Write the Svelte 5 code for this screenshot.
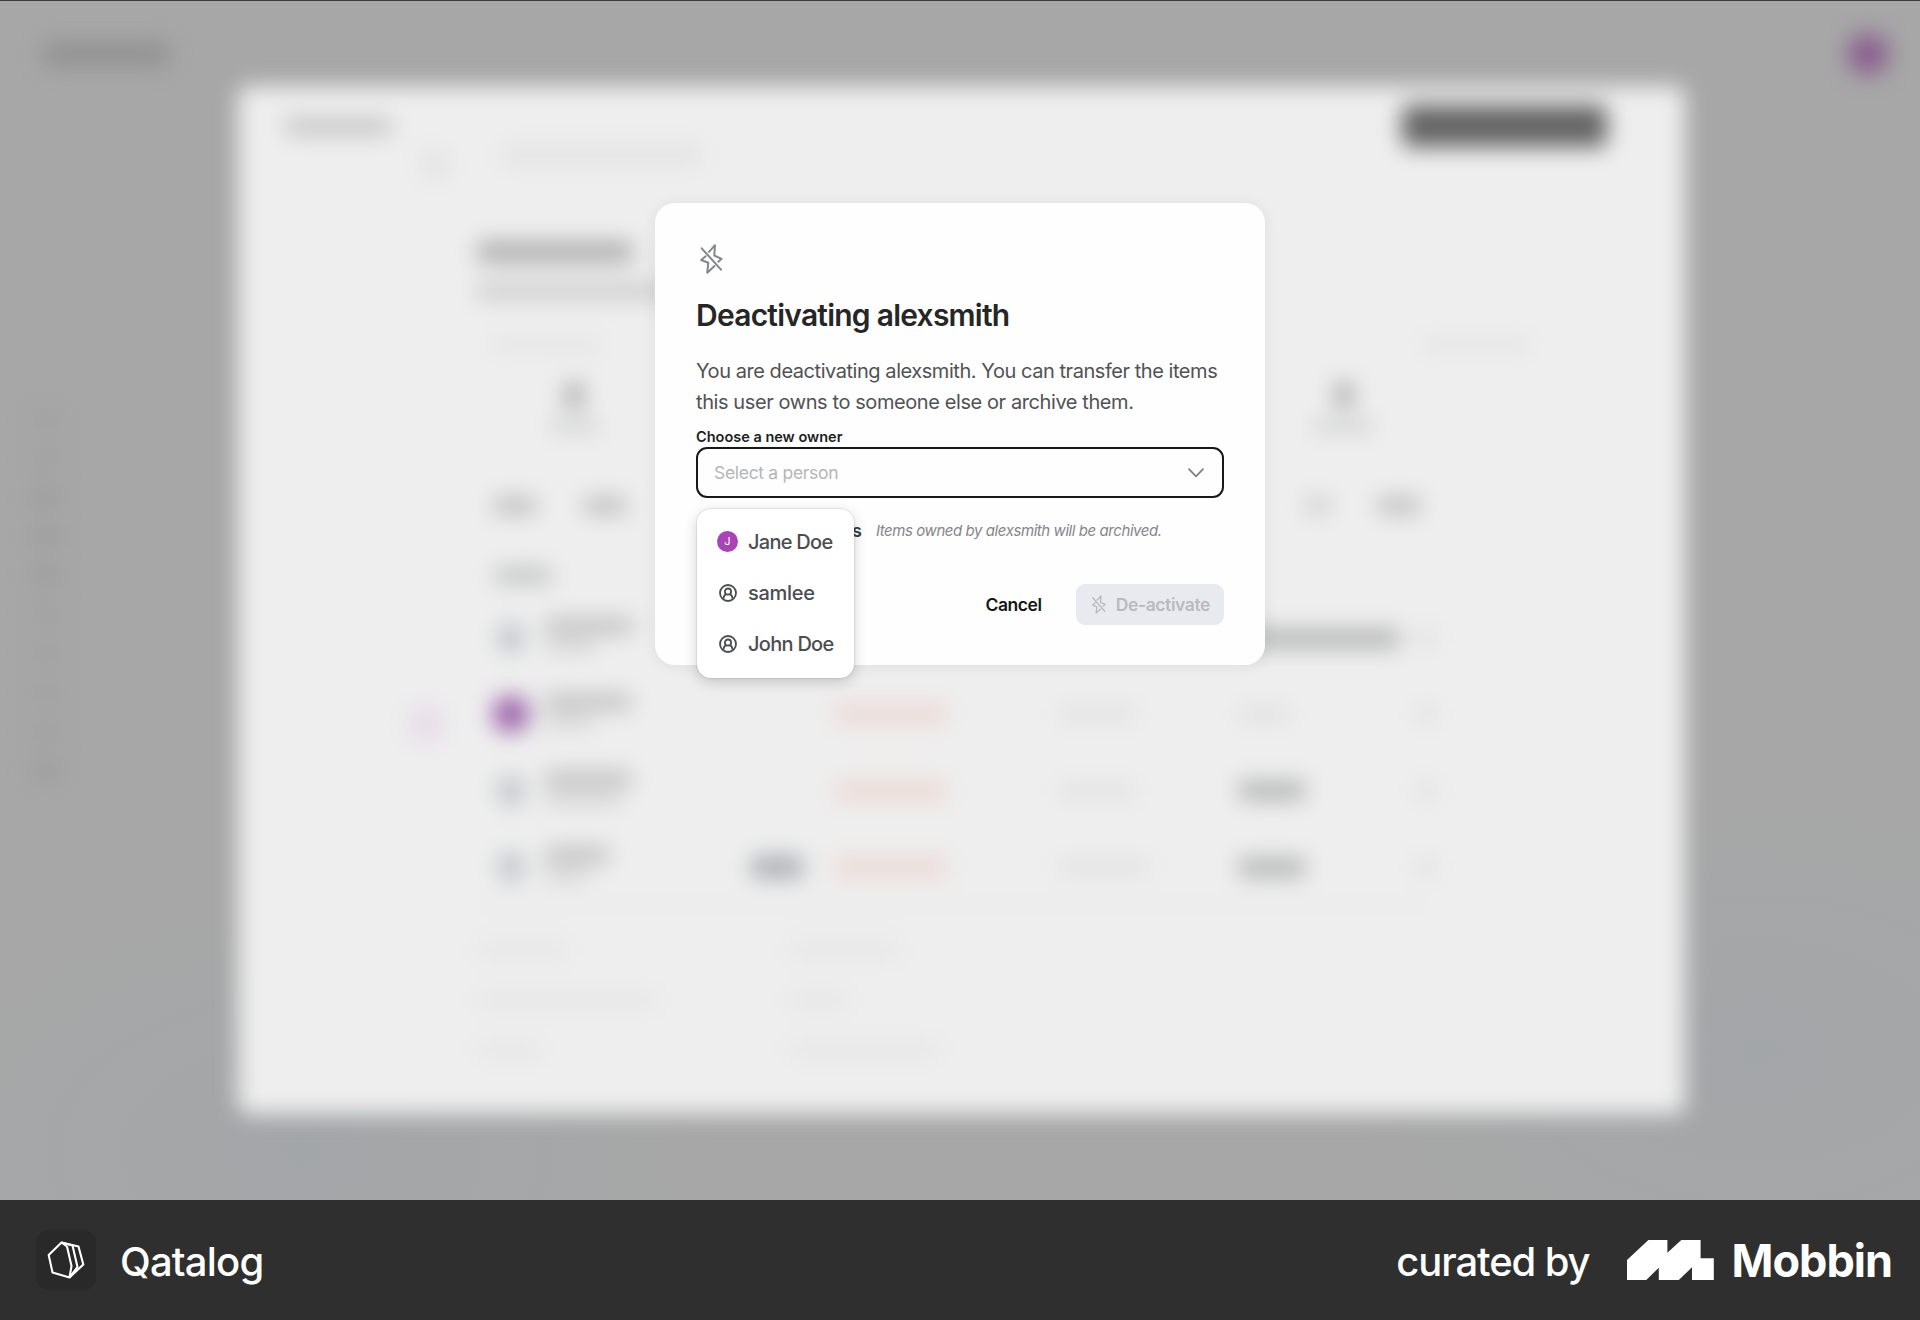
<script>
  const people = [
    { name: 'Jane Doe', initial: 'J', cls: 'jane' },
    { name: 'samlee', cls: 'sam' },
    { name: 'John Doe', cls: 'john' }
  ];

  // Widths of the out-of-focus table cells behind the dialog.
  const rows = [
    { avatar: 'muted', name: 88, sub: 50, tag: 0, alert: 0, note: 0, role: 160, dark: true },
    { avatar: 'purple', name: 86, sub: 46, tag: 0, alert: 112, note: 76, role: 50, dark: false },
    { avatar: 'muted', name: 86, sub: 76, tag: 0, alert: 112, note: 76, role: 66, dark: true },
    { avatar: 'muted', name: 64, sub: 42, tag: 52, alert: 112, note: 90, role: 66, dark: true }
  ];

  const ghosts = [
    [90, 110],
    [180, 60],
    [64, 150]
  ];

  const nav = [1, 1, 3, 3, 3, 1, 1, 1, 1, 3];
</script>

{#snippet boltOff()}
  <svg class="bolt" viewBox="0 0 24 30" fill="none" stroke="currentColor" stroke-linejoin="round" stroke-linecap="round">
    <path d="M2.700 4.300 22 25.700" />
    <path d="M10 7.900 16 1.200 15.300 11.500 22.600 14.800 19.300 17.700" />
    <path d="M6.600 12.200 2.200 16 9.300 18.700 8.300 28.700 15.500 22" />
  </svg>
{/snippet}

{#snippet person()}
  <svg class="person" viewBox="0 0 18 18" fill="none" stroke="currentColor" stroke-width="1.8">
    <circle cx="9" cy="9" r="8" />
    <circle cx="9" cy="7.600" r="3.100" />
    <path d="M4.400 14.600c.3-2.400 1.300-3.900 2.900-4.500M13.600 14.600c-.3-2.400-1.300-3.900-2.900-4.500" />
  </svg>
{/snippet}

<main>
  <section class="stage">
    <div class="page" aria-hidden="true">
      <div class="topbar">
        <i class="brand"></i>
        <i class="me"></i>
      </div>
      <div class="columns">
        <nav>
          {#each nav as strength}
            <i class:strong={strength === 3}></i>
          {/each}
        </nav>
        <div class="panel">
          <div class="head"><i class="crumb"></i><i class="action"></i></div>
          <div class="faint-head"><i class="dot"></i><i class="line"></i></div>
          <div class="body">
            <i class="title"></i>
            <i class="subtitle"></i>
            <div class="split caption"><i></i><i></i></div>
            <div class="split numbers"><i></i><i></i></div>
            <div class="split labels"><i></i><i></i></div>
            <div class="tabs"><i></i><i></i><i class="far"></i><i></i></div>
            <i class="section"></i>
            <div class="table">
              {#each rows as row}
                <div class="row">
                  <i class="avatar {row.avatar}"></i>
                  <div class="who">
                    <i style:width="{row.name}px"></i>
                    <i class="sub" style:width="{row.sub}px"></i>
                  </div>
                  <i class="tag" style:width="{row.tag}px"></i>
                  <i class="alert" style:width="{row.alert}px"></i>
                  <i class="note" style:width="{row.note}px"></i>
                  <i class="role" class:dark={row.dark} style:width="{row.role}px"></i>
                  <i class="more"></i>
                </div>
              {/each}
            </div>
            <div class="ghosts">
              {#each ghosts as [a, b]}
                <div><i style:width="{a}px"></i><i style:width="{b}px"></i></div>
              {/each}
            </div>
          </div>
        </div>
      </div>
    </div>

    <div class="overlay">
      <div class="modal" role="dialog" aria-labelledby="dialog-title">
        <div class="symbol">{@render boltOff()}</div>
        <h1 id="dialog-title">Deactivating alexsmith</h1>
        <p class="copy">
          <span class="l1">You are deactivating alexsmith. You can transfer the items</span>
          <span class="l2">this user owns to someone else or archive them.</span>
        </p>
        <div class="label"><span>Choose a new owner</span></div>
        <div class="select">
          <span>Select a person</span>
          <svg viewBox="0 0 16 10" fill="none" stroke="currentColor" stroke-width="1.7" stroke-linecap="round" stroke-linejoin="round">
            <path d="M1 1.200 8 8.400 15 1.200" />
          </svg>
          <ul class="menu">
            {#each people as p}
              <li>
                <span class="pic">
                  {#if p.initial}<b>{p.initial}</b>{:else}{@render person()}{/if}
                </span>
                <span class={p.cls}>{p.name}</span>
              </li>
            {/each}
          </ul>
        </div>
        <div class="archive">
          <strong>s</strong>
          <em>Items owned by alexsmith will be archived.</em>
        </div>
        <div class="actions">
          <button class="cancel">Cancel</button>
          <button class="deactivate" disabled>{@render boltOff()}<span>De-activate</span></button>
        </div>
      </div>
    </div>
  </section>

  <footer>
    <div class="tile">
      <svg viewBox="0 0 38 38" fill="none" stroke="#fff" stroke-width="2.1" stroke-linejoin="round">
        <path d="M14.500 1.500 1.700 14 5.500 31.500 22.500 36.500 24.500 25 20 5.500Z" />
        <path d="M14.500 1.500 25.500 4.500 30.500 26 22.500 36.500" />
        <path d="M14.500 1.500 31.500 5.500 36.300 23.500 22.500 36.500" />
      </svg>
    </div>
    <span class="app">Qatalog</span>
    <span class="curated">curated by</span>
    <svg class="mobbin-mark" viewBox="0 0 87 40" fill="#fff">
      <path d="M0 20 21.400 0H40.400V12.700L54.300 0H73.600V18.300H86.800V40H65V27.300L51.800 40H31.800V27.700L19.300 40H0Z" />
    </svg>
    <span class="mobbin">Mobbin</span>
  </footer>
</main>

<style>
  :global(body) {
    margin: 0;
    background: #2f2f2f;
  }
  main {
    width: 1920px;
    height: 1320px;
    overflow: hidden;
    font-family: Inter, 'Liberation Sans', sans-serif;
  }
  i {
    display: block;
    flex: none;
    box-sizing: border-box;
  }
  .stage {
    position: relative;
    height: 1200px;
    box-sizing: border-box;
    overflow: hidden;
    border-top: 1px solid #3b393c;
    background:
      radial-gradient(ellipse 420px 260px at 300px 1150px, #a3a6a8, transparent),
      radial-gradient(ellipse 420px 260px at 1760px 1050px, #a3a6a8, transparent),
      #a7a7a7;
  }

  /* Out-of-focus page */
  .page {
    filter: blur(11px);
    height: 1199px;
  }
  .topbar {
    height: 85px;
    padding: 20px 31px 0 42px;
    box-sizing: border-box;
    display: flex;
    align-items: center;
    justify-content: space-between;
  }
  .brand {
    width: 128px;
    height: 24px;
    border-radius: 10px;
    background: #919191;
  }
  .me {
    width: 42px;
    height: 42px;
    border-radius: 50%;
    background: #8b6090;
  }
  .columns {
    display: flex;
  }
  nav {
    width: 208px;
    padding: 324px 0 0 30px;
    display: flex;
    flex-direction: column;
    gap: 21px;
  }
  nav i {
    width: 32px;
    height: 18px;
    border-radius: 8px;
    background: #a1a1a1;
  }
  nav i.strong {
    background: #9d9d9d;
  }
  .panel {
    width: 1447px;
    height: 1028px;
    box-sizing: border-box;
    padding-top: 21px;
    border-radius: 10px;
    background: #eee;
  }
  .head {
    height: 38px;
    padding: 0 78px 0 46px;
    display: flex;
    align-items: center;
    justify-content: space-between;
  }
  .crumb {
    width: 108px;
    height: 17px;
    background: #c4c4c4;
    border-radius: 6px;
  }
  .action {
    width: 205px;
    height: 42px;
    border-radius: 8px;
    background: #656565;
  }
  .faint-head {
    height: 40px;
    padding-left: 180px;
    display: flex;
    align-items: center;
    gap: 50px;
  }
  .dot {
    width: 34px;
    height: 34px;
    border-radius: 50%;
    background: #e5e5e5;
  }
  .line {
    width: 200px;
    height: 24px;
    margin-bottom: 20px;
    background: #e5e5e5;
  }
  .body {
    padding: 56px 257px 0 239px;
  }
  .title {
    width: 156px;
    height: 22px;
    border-radius: 6px;
    background: #b0b0b0;
  }
  .subtitle {
    width: 300px;
    height: 16px;
    margin-top: 20px;
    background: #cbcbcb;
  }
  .split {
    display: flex;
  }
  .caption {
    margin: 40px 0 0 14px;
    gap: 820px;
  }
  .caption i {
    width: 110px;
    height: 11px;
    background: #e2e2e2;
  }
  .numbers {
    margin: 33px 0 0 88px;
    gap: 752px;
  }
  .numbers i {
    width: 18px;
    height: 24px;
    background: #a8a8a8;
  }
  .labels {
    margin: 13px 0 0 74px;
    gap: 714px;
  }
  .labels i {
    width: 48px;
    height: 12px;
    background: #cfd0d0;
  }
  .labels i + i {
    width: 60px;
  }
  .tabs {
    margin: 65px 0 0 16px;
    display: flex;
    gap: 46px;
  }
  .tabs i {
    width: 44px;
    height: 17px;
    border-radius: 6px;
    background: #bebebe;
  }
  .tabs .far {
    width: 26px;
    margin-left: 632px;
    background: #cfcfcf;
  }
  .section {
    width: 56px;
    height: 17px;
    margin: 53px 0 0 18px;
    background: #c3c4c4;
  }
  .table {
    margin-top: 16px;
    padding-left: 18px;
    border-bottom: 2px solid #e2e2e2;
  }
  .row {
    height: 76.300px;
    display: grid;
    grid-template-columns: 50px 206px 84px 224px 180px 178px 24px;
    align-items: center;
  }
  .avatar {
    width: 38px;
    height: 38px;
    margin-left: -3px;
    border-radius: 50%;
  }
  .avatar.purple {
    background: #a069ad;
    box-shadow: -85px 10px 0 0 #e8dce9;
  }
  .avatar.muted {
    width: 28px;
    height: 32px;
    margin-left: 2px;
    background: #c2c6ca;
  }
  .who i {
    height: 16px;
    background: #bfbfbf;
  }
  .who .sub {
    height: 11px;
    margin: 7px 0 6px;
    background: #d0d0d0;
  }
  .tag {
    height: 22px;
    background: #a9acb0;
    border-radius: 6px;
  }
  .alert {
    height: 20px;
    background: #ecd9d5;
  }
  .note {
    height: 16px;
    background: #e2e2e2;
  }
  .role {
    height: 16px;
    background: #e0e0e0;
  }
  .role.dark {
    height: 19px;
    background: #b3b4b5;
  }
  .more {
    width: 18px;
    height: 18px;
    background: #e0e0e0;
  }
  .ghosts {
    margin-top: 18px;
  }
  .ghosts div {
    height: 50px;
    display: grid;
    grid-template-columns: 312px auto;
    align-items: center;
  }
  .ghosts i {
    height: 18px;
    background: #e7e7e7;
  }

  /* Dialog */
  .overlay {
    position: absolute;
    inset: 0;
    padding-top: 202px;
    display: flex;
    justify-content: center;
    align-items: flex-start;
  }
  .modal {
    width: 610px;
    height: 462px;
    box-sizing: border-box;
    padding: 41px 41px 40px;
    display: flex;
    flex-direction: column;
    border-radius: 20px;
    background: #fefefe;
    box-shadow: 0 1px 16px rgba(0, 0, 0, 0.07);
  }
  .modal span,
  .modal em,
  h1 {
    white-space: nowrap;
  }
  .symbol {
    height: 30px;
    padding-left: 3px;
    color: #85868a;
  }
  .bolt {
    display: block;
    width: 24px;
    height: 30px;
    stroke-width: 2;
  }
  h1 {
    margin: 19px 0 0;
    height: 44px;
    line-height: 44px;
    font-size: 30px;
    font-weight: 600;
    letter-spacing: -0.760px;
    color: #262627;
  }
  .copy {
    margin: 19px 0 0;
    height: 60px;
    font-size: 20px;
    line-height: 30.500px;
    color: #515255;
    display: flex;
    flex-direction: column;
  }
  .l1 {
    letter-spacing: -0.450px;
  }
  .l2 {
    letter-spacing: -0.410px;
  }
  .label {
    height: 31px;
    display: flex;
    align-items: flex-end;
    font-size: 14.500px;
    font-weight: 600;
    line-height: 20px;
    letter-spacing: 0;
    color: #1d1d1e;
  }
  .select {
    position: relative;
    height: 51px;
    box-sizing: border-box;
    padding: 0 18px 0 16px;
    border: 2.500px solid #17181a;
    border-radius: 11px;
    display: flex;
    align-items: center;
    justify-content: space-between;
    font-size: 17.500px;
    letter-spacing: -0.310px;
    color: #b5b6b8;
  }
  .select > svg {
    width: 16px;
    height: 10px;
    color: #7d7e82;
  }
  .menu {
    position: absolute;
    left: -1px;
    top: 60px;
    width: 157px;
    height: 169px;
    box-sizing: border-box;
    margin: 0;
    padding: 7px 0 9px 20px;
    list-style: none;
    border-radius: 14px;
    background: #fff;
    box-shadow:
      0 0 1px 1px rgba(0, 0, 0, 0.08),
      0 4px 14px rgba(0, 0, 0, 0.18);
    font-size: 20px;
    font-weight: 500;
    color: #4c4d50;
  }
  .menu li {
    height: 51px;
    display: flex;
    align-items: center;
    gap: 10px;
  }
  .jane,
  .john {
    letter-spacing: -0.720px;
  }
  .pic {
    width: 21px;
    height: 21px;
    display: grid;
    place-items: center;
  }
  .pic b {
    width: 21px;
    line-height: 21px;
    border-radius: 50%;
    background: #a944b6;
    color: #fff;
    font-size: 11px;
    font-weight: 400;
    text-align: center;
    letter-spacing: 0;
  }
  .person {
    width: 18px;
    height: 18px;
  }
  .archive {
    height: 66px;
    padding-left: 156px;
    display: flex;
    align-items: center;
    gap: 14px;
    line-height: 22px;
  }
  .archive strong {
    font-size: 18px;
    font-weight: 600;
    color: #3f4043;
  }
  .archive em {
    font-size: 15px;
    letter-spacing: -0.430px;
    color: #85868a;
  }
  .actions {
    margin-top: auto;
    height: 41px;
    display: flex;
    justify-content: flex-end;
    gap: 21px;
  }
  button {
    border: 0;
    padding: 0;
    background: none;
    font: 600 17.500px Inter, sans-serif;
  }
  .cancel {
    width: 83px;
    letter-spacing: -0.450px;
    color: #161617;
  }
  .deactivate {
    width: 148px;
    padding: 0 14px 0 15px;
    display: flex;
    align-items: center;
    justify-content: space-between;
    border-radius: 9px;
    background: #e9eaef;
    color: #b9babf;
    letter-spacing: -0.400px;
  }
  .deactivate .bolt {
    width: 15px;
    height: 19px;
    stroke-width: 2.1;
  }

  /* Attribution bar */
  footer {
    height: 120px;
    box-sizing: border-box;
    padding: 0 28px 0 36px;
    display: flex;
    align-items: center;
    background: #2f2f2f;
    color: #fff;
    white-space: nowrap;
  }
  .tile {
    width: 60px;
    height: 60px;
    display: grid;
    place-items: center;
    border-radius: 13px;
    background: #292929;
  }
  .tile svg {
    width: 38px;
    height: 38px;
  }
  .app {
    margin-left: 24px;
    padding-top: 2px;
    font-size: 40px;
    font-weight: 500;
    letter-spacing: -0.800px;
  }
  .curated {
    margin-left: auto;
    padding-top: 2px;
    font-size: 40px;
    font-weight: 500;
    letter-spacing: -1.100px;
  }
  .mobbin-mark {
    width: 87px;
    height: 40px;
    margin: 0 18px 0 37px;
  }
  .mobbin {
    font-size: 45px;
    font-weight: 700;
    letter-spacing: -1px;
  }
</style>
